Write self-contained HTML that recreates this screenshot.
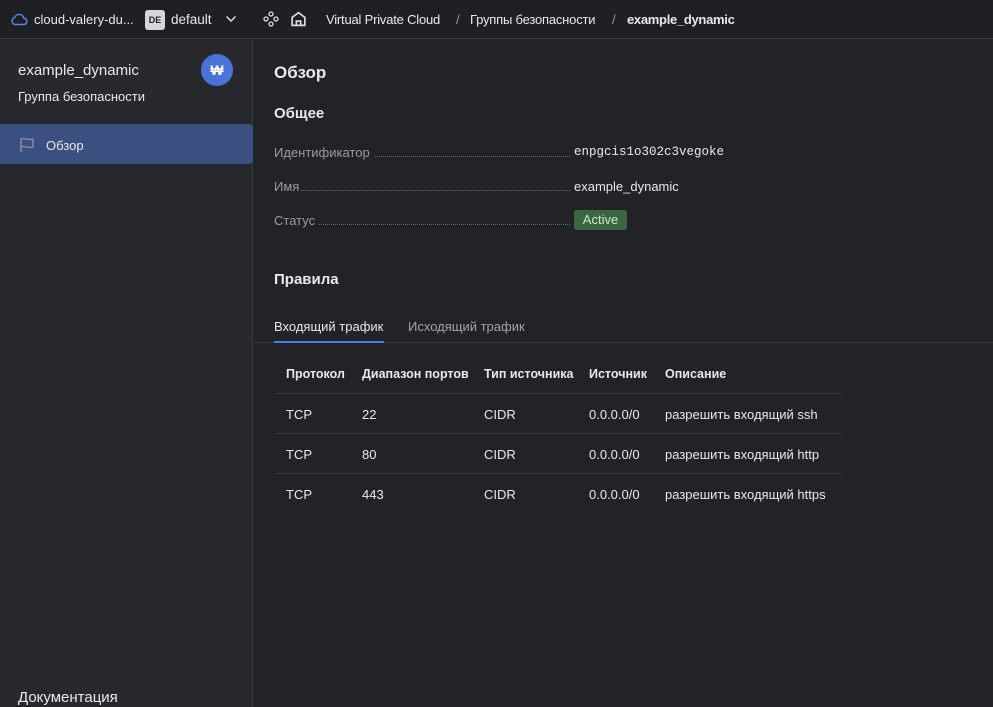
<!DOCTYPE html>
<html><head><meta charset="utf-8"><style>
*{box-sizing:border-box;margin:0;padding:0}
body{width:993px;height:707px;overflow:hidden;background:#222327;font-family:"Liberation Sans","Noto Sans CJK SC",sans-serif;color:#e9e9ea;font-size:13px;position:relative}
.top{position:absolute;left:0;top:0;width:993px;height:39px;background:#1f2024;border-bottom:1px solid #3a3b40}
.t{position:absolute;top:12px;font-size:13px;white-space:nowrap}
.side{position:absolute;left:0;top:40px;width:253px;height:667px;background:#28292d;border-right:1px solid #3a3b40}
.main{position:absolute;left:254px;top:40px;right:0;bottom:0}
.a{position:absolute;white-space:nowrap}
.lbl{color:#9a9b9f;font-size:13px}
.dots{position:absolute;border-bottom:1px dotted #66676b;height:1px}
.th{font-weight:bold;font-size:12.5px}
.row{position:absolute;left:20px;width:567px;border-top:1px solid #3a3b40}
</style></head><body>
<div class="top">
<svg style="position:absolute;left:10px;top:12px" width="18" height="14" viewBox="0 0 18 14"><path d="M5 12.5h8.5a3.2 3.2 0 0 0 .3-6.4A4.8 4.8 0 0 0 4.6 5.5 3.6 3.6 0 0 0 5 12.5z" fill="none" stroke="#5a82e8" stroke-width="1.5"/></svg>
<div class="t" style="left:34px">cloud-valery-du...</div>
<div style="position:absolute;left:145px;top:10px;width:20px;height:20px;background:#d4d8dc;border-radius:3px;color:#222;font-size:9px;font-weight:bold;text-align:center;line-height:20px">DE</div>
<div class="t" style="left:171px;font-size:13.5px">default</div>
<svg style="position:absolute;left:225px;top:15px" width="12" height="8" viewBox="0 0 12 8"><path d="M1.5 1.5 6 6l4.5-4.5" fill="none" stroke="#ddd" stroke-width="1.5"/></svg>
<svg style="position:absolute;left:263px;top:11px" width="16" height="16" viewBox="0 0 16 16" fill="none" stroke="#ddd" stroke-width="1.3"><circle cx="8" cy="3" r="2"/><circle cx="3" cy="8" r="2"/><circle cx="13" cy="8" r="2"/><circle cx="8" cy="13" r="2"/></svg>
<svg style="position:absolute;left:290px;top:10px" width="17" height="18" viewBox="0 0 16 16" fill="none" stroke="#ddd" stroke-width="1.6"><path d="M2 14V6.5L8 2l6 4.5V14zM6 14V10h4v4"/></svg>
<div class="t" style="left:326px;letter-spacing:-0.2px">Virtual Private Cloud</div>
<div class="t" style="left:456px;color:#999">/</div>
<div class="t" style="left:470px;letter-spacing:-0.2px">Группы безопасности</div>
<div class="t" style="left:612px;color:#999">/</div>
<div class="t" style="left:627px;font-weight:bold;letter-spacing:-0.3px">example_dynamic</div>
</div>
<div class="side">
<div class="a" style="left:18px;top:22px;font-size:15px">example_dynamic</div>
<div class="a" style="left:18px;top:49px;font-size:13px">Группа безопасности</div>
<div style="position:absolute;left:201px;top:14px;width:32px;height:32px;border-radius:50%;background:#4a73d8;color:#fff;font-weight:bold;text-align:center;line-height:32px;font-size:14px">₩</div>
<div style="position:absolute;left:0;top:84px;width:253px;height:40px;background:#3b4f80;border-radius:0 4px 4px 0"></div>
<svg style="position:absolute;left:19px;top:97px" width="16" height="16" viewBox="0 0 16 16" fill="none" stroke="#8a93a8" stroke-width="1.3"><path d="M2 15V2c4-2 6 2 12 0v8c-6 2-8-2-12 0"/></svg>
<div class="a" style="left:46px;top:98px;font-size:13px">Обзор</div>
<div class="a" style="left:18px;top:649px;font-size:15px">Документация</div>
</div>
<div class="main">
<div class="a" style="left:20px;top:23px;font-size:17px;font-weight:bold">Обзор</div>
<div class="a" style="left:20px;top:65px;font-size:15px;font-weight:bold">Общее</div>
<div class="a lbl" style="left:20px;top:105px">Идентификатор</div><div class="dots" style="left:121px;width:195px;top:116px"></div>
<div class="a" style="left:320px;top:105px;font-family:'Liberation Mono',monospace;font-size:12.5px">enpgcis1o302c3vegoke</div>
<div class="a lbl" style="left:20px;top:139px">Имя</div><div class="dots" style="left:47px;width:269px;top:150px"></div>
<div class="a" style="left:320px;top:139px">example_dynamic</div>
<div class="a lbl" style="left:20px;top:173px">Статус</div><div class="dots" style="left:65px;width:251px;top:184px"></div>
<div style="position:absolute;left:320px;top:170px;width:53px;height:20px;background:#3a6740;border-radius:3px;color:#c8ebc6;text-align:center;line-height:20px">Active</div>
<div class="a" style="left:20px;top:231px;font-size:15px;font-weight:bold">Правила</div>
<div class="a" style="left:20px;top:279px">Входящий трафик</div>
<div class="a" style="left:154px;top:279px;color:#a3a4a8">Исходящий трафик</div>
<div style="position:absolute;left:0;right:0;top:302px;height:1px;background:#3a3b40"></div>
<div style="position:absolute;left:20px;width:110px;top:301px;height:2px;background:#4f7cea"></div>
<div class="a th" style="left:32px;top:327px">Протокол</div>
<div class="a th" style="left:108px;top:327px">Диапазон портов</div>
<div class="a th" style="left:230px;top:327px">Тип источника</div>
<div class="a th" style="left:335px;top:327px">Источник</div>
<div class="a th" style="left:411px;top:327px">Описание</div>
<div class="row" style="top:353px"></div><div class="row" style="top:393px"></div><div class="row" style="top:433px"></div>
<div class="a" style="left:32px;top:367px">TCP</div><div class="a" style="left:108px;top:367px">22</div><div class="a" style="left:230px;top:367px">CIDR</div><div class="a" style="left:335px;top:367px">0.0.0.0/0</div><div class="a" style="left:411px;top:367px">разрешить входящий ssh</div>
<div class="a" style="left:32px;top:407px">TCP</div><div class="a" style="left:108px;top:407px">80</div><div class="a" style="left:230px;top:407px">CIDR</div><div class="a" style="left:335px;top:407px">0.0.0.0/0</div><div class="a" style="left:411px;top:407px">разрешить входящий http</div>
<div class="a" style="left:32px;top:447px">TCP</div><div class="a" style="left:108px;top:447px">443</div><div class="a" style="left:230px;top:447px">CIDR</div><div class="a" style="left:335px;top:447px">0.0.0.0/0</div><div class="a" style="left:411px;top:447px">разрешить входящий https</div>
</div>
</body></html>
